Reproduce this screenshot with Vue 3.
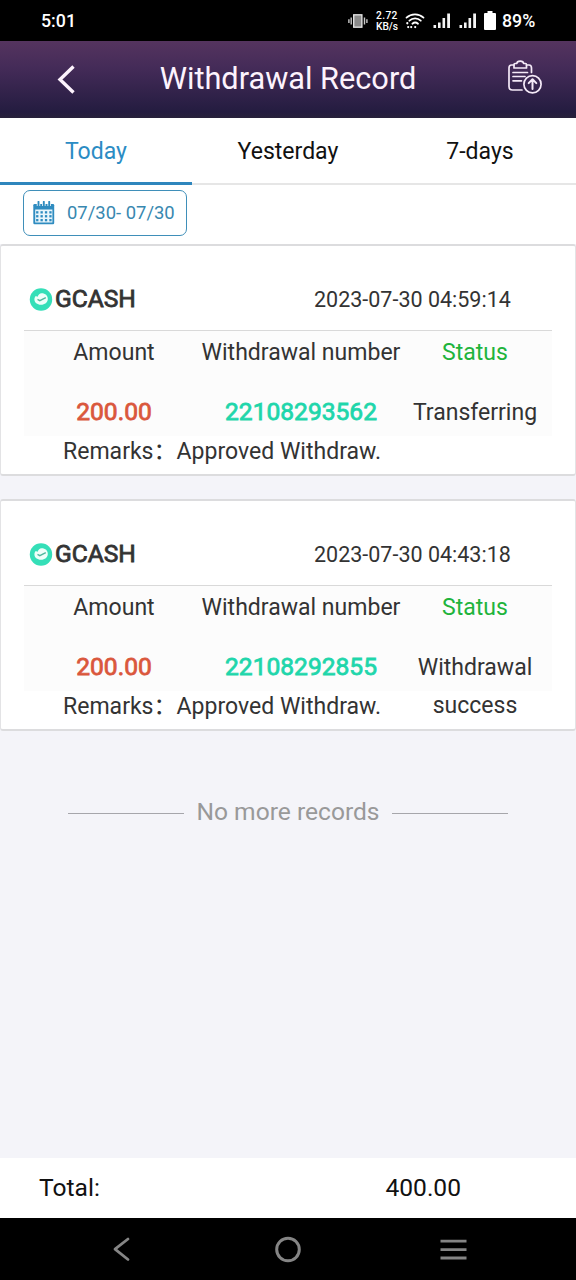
<script setup>
const tabs = ['Today', 'Yesterday', '7-days']
const records = [
  { time: '2023-07-30 04:59:14', amount: '200.00', number: '22108293562', status: 'Transferring' },
  { time: '2023-07-30 04:43:18', amount: '200.00', number: '22108292855', status: 'Withdrawal success' },
]
const dotRows = [12.5, 16.4, 20.3]
const dotCols = [4.2, 8.6, 13, 17.4]
</script>

<template>
  <div class="screen">
    <div class="statusbar">
      <span class="clock">5:01</span>
      <svg class="vibrate" width="20" height="16" viewBox="0 0 20 16">
        <rect x="5.7" y="1.8" width="8.2" height="12.4" fill="#8a8a8a" stroke="#e8e8e8" stroke-width="1.3" />
        <path d="M3.2 4.5v7M.9 6.3v3.6M16.5 4.5v7M18.9 6.3v3.6" stroke="#ccc" stroke-width="1.4" />
      </svg>
      <span class="speed"><span>2.72</span><span>KB/s</span></span>
      <svg class="wifi" width="20" height="17" viewBox="0 0 20 17" fill="none" stroke="#fff" stroke-width="1.8" stroke-linecap="round">
        <path d="M1.500 5.600C6.200 1.200 13.800 1.200 18.500 5.600M4.400 8.700C7.700 5.600 12.500 5.600 15.800 8.700M7.400 11.700C9 10.300 11.400 10.300 13 11.700" />
        <path d="M2.300 11.200v.1M3.200 15v.1M6.200 15v.1M10.200 15v.1" stroke-width="2.200" />
      </svg>
      <svg class="signal" width="18" height="17" viewBox="0 0 18 17" fill="#f4f4f4">
        <path d="M.5 13h2.600v3H.5zM5 10.500h2.600V16H5zM9.500 6h2.600v10H9.500zM14.200 1.500H17V16h-2.800z" />
      </svg>
      <svg class="signal" width="18" height="17" viewBox="0 0 18 17" fill="#f4f4f4">
        <path d="M.5 13h2.600v3H.5zM5 10.500h2.600V16H5zM9.500 6h2.600v10H9.500zM14.200 1.500H17V16h-2.800z" />
      </svg>
      <svg class="battery" width="12" height="19" viewBox="0 0 12 19" fill="#fff">
        <path d="M3.500 0h5v2H11q1 0 1 1v15q0 1-1 1H1q-1 0-1-1V3q0-1 1-1h2.500z" />
      </svg>
      <span class="percent">89%</span>
    </div>

    <header class="header">
      <svg class="back" width="20" height="32" viewBox="0 0 20 32">
        <path d="M18.500 2.500 5 15.500l13.500 13" fill="none" stroke="#fdf3fd" stroke-width="3.400" />
      </svg>
      <h1>Withdrawal Record</h1>
      <svg class="clip" width="36" height="36" viewBox="0 0 36 36" fill="none" stroke="#f5eaf8" stroke-width="1.7" stroke-linecap="round" stroke-linejoin="round">
        <path d="M7 5H4.500Q2 5 2 8v18.500Q2 30 5.500 30H15M19.500 5H22q2.500 0 2.500 3v4.500" />
        <path d="M7 8V4.500q0-1 1-1h1.800q.2-2.300 3.400-2.300t3.400 2.300h1.900q1 0 1 1V8z" />
        <path d="M6 12.500h14.500M6 16.500h12M6 20.800h8.500" />
        <circle cx="25.500" cy="24.200" r="8.600" />
        <path d="M25.500 29V19.500M21.700 23.100l3.800-3.800 3.800 3.800" stroke-width="2" />
      </svg>
    </header>

    <nav class="tabs">
      <div v-for="(tab, i) in tabs" :key="tab" class="tab" :class="{ active: i === 0 }">{{ tab }}</div>
    </nav>

    <div class="filter">
      <div class="range">
        <svg width="22" height="24" viewBox="0 0 22 24">
          <path d="M1.500 3H20q1.200 0 1.200 1.200V22q0 1.200-1.200 1.200H1.500Q.3 23.200.3 22V4.200Q.3 3 1.500 3z" fill="#2f8cc0" />
          <path d="M2.200 8.500h17.200v13H2.200z" fill="#e9f5fb" />
          <path d="M5.500 1v4M10.800 1v4M16.200 1v4" stroke="#fff" stroke-width="3.400" />
          <path d="M5.500 .8v4M10.800 .8v4M16.200 .8v4" stroke="#2f8cc0" stroke-width="1.900" stroke-linecap="round" />
          <template v-for="y in dotRows" :key="y">
            <rect v-for="x in dotCols" :key="x" :x="x - 1.100" :y="y - 2.300" width="2.300" height="2.300" fill="#2f8cc0" />
          </template>
        </svg>
        <span class="dates">07/30- 07/30</span>
      </div>
    </div>

    <main class="list">
      <section v-for="r in records" :key="r.number" class="card">
        <div class="top">
          <svg width="24" height="24" viewBox="0 0 24 24">
            <circle cx="12" cy="12.500" r="11.200" fill="#35dfb8" />
            <path d="M12.500 6.300c4 0 6.300 2.400 6.300 5.700s-3 5.800-6.800 5.800-6.600-2.300-6.600-5.500c0-1.400.5-2.500 1.300-3.400l1.900.8c.9-2 2.100-3.400 3.900-3.400z" fill="#effffa" />
            <path d="m8.500 12.400 2.300 1.200 6-3" fill="none" stroke="#52b99f" stroke-width="1.400" />
          </svg>
          <span class="method">GCASH</span>
          <span class="time">{{ r.time }}</span>
        </div>
        <div class="grid">
          <div>Amount</div>
          <div class="wide">Withdrawal number</div>
          <div class="green">Status</div>
          <div class="value amount">{{ r.amount }}</div>
          <div class="value number">{{ r.number }}</div>
          <div class="state">{{ r.status }}</div>
        </div>
        <div class="remarks">Remarks：Approved Withdraw.</div>
      </section>
      <div class="end"><span>No more records</span></div>
    </main>

    <footer class="total"><span>Total:</span><span class="sum">400.00</span></footer>

    <div class="navbar">
      <svg width="576" height="62" viewBox="0 0 576 62" fill="none" stroke="#858585" stroke-width="2.800">
        <path d="M128 21 115 31.200l13 10.300" stroke-linecap="round" stroke-linejoin="round" />
        <circle cx="288" cy="31.500" r="11.300" stroke-width="3" />
        <path d="M440.500 23.200h26M440.500 31.600h26M440.500 40h26" />
      </svg>
    </div>
  </div>
</template>

<style>
body {
  margin: 0;
}
</style>

<style scoped>
.screen {
  width: 576px;
  height: 1280px;
  display: flex;
  flex-direction: column;
  overflow: hidden;
  background: #f4f4f9;
  color: #333;
  font-family: Roboto, "Noto Sans CJK SC", sans-serif;
  font-size: 23.04px;
}
.statusbar {
  height: 41px;
  flex: none;
  display: flex;
  align-items: center;
  background: #000;
  color: #fff;
  font-weight: 500;
  font-size: 17.8px;
}
.clock {
  width: 307px;
  margin-left: 41px;
}
.speed {
  width: 23px;
  margin-left: 8px;
  display: flex;
  flex-direction: column;
  font-size: 10.2px;
  line-height: 11px;
}
.speed span:first-child {
  letter-spacing: 0.4px;
}
.wifi {
  margin-left: 6px;
}
.signal {
  margin-left: 8px;
}
.battery {
  margin-left: 7px;
}
.percent {
  margin-left: 6px;
}
.header {
  height: 77px;
  flex: none;
  display: flex;
  align-items: center;
  background: linear-gradient(#55345f, #442b58 35%, #241c40 92%, #27213a);
  color: #fdf3fd;
}
.back {
  margin-left: 55px;
}
h1 {
  margin: 0 0 2px;
  width: 426px;
  text-align: center;
  font-weight: 400;
  font-size: 30.72px;
}
.clip {
  margin-left: 6px;
  margin-top: -3px;
}
.tabs {
  height: 67px;
  flex: none;
  display: flex;
  background: #fff;
  color: #111;
}
.tab {
  flex: 1;
  box-sizing: border-box;
  text-align: center;
  line-height: 67px;
  height: 67px;
  border-bottom: 2px solid #e6e6e6;
}
.tab.active {
  color: #2b8cc4;
  border-bottom: 3px solid #2e86bd;
}
.filter {
  height: 59px;
  flex: none;
  box-sizing: border-box;
  padding: 5px 23px;
  background: #fff;
}
.range {
  width: 164px;
  height: 46px;
  box-sizing: border-box;
  display: flex;
  align-items: center;
  gap: 12px;
  padding-left: 9px;
  border: 1px solid #3f8fb9;
  border-radius: 7px;
  color: #3888b0;
  font-size: 18.43px;
  white-space: nowrap;
}
.dates {
  margin-bottom: 2px;
}
.list {
  flex: 1;
}
.card {
  height: 232px;
  box-sizing: border-box;
  margin-bottom: 23px;
  padding: 0 23px;
  border: 1px solid #e3e3e5;
  border-top: 2px solid #dcdcde;
  border-bottom: 2px solid #dcdcde;
  border-radius: 3px;
  background: #fff;
}
.top {
  height: 85px;
  box-sizing: border-box;
  padding: 22px 0 0 5px;
  display: flex;
  align-items: center;
  border-bottom: 1px solid #d9d9d9;
}
.method {
  width: 259px;
  margin-left: 2px;
  margin-bottom: 2px;
  font-size: 24.58px;
  -webkit-text-stroke: 0.8px #333;
}
.time {
  font-size: 21.5px;
}
.grid {
  height: 105px;
  box-sizing: border-box;
  padding-top: 3px;
  display: grid;
  grid-template-columns: 180px 194px 154px;
  grid-template-rows: 60px 39px;
  line-height: 38.5px;
  text-align: center;
  white-space: nowrap;
  background: #fcfcfc;
}
.wide {
  margin: 0 -10px;
}
.green {
  color: #1fb43c;
}
.value {
  font-size: 24.58px;
  line-height: 36.5px;
}
.amount {
  color: #da573c;
  -webkit-text-stroke: 0.8px #da573c;
}
.number {
  color: #1fd6ab;
  -webkit-text-stroke: 0.8px #1fd6ab;
}
.state {
  padding: 0 10px;
  line-height: 38px;
  white-space: normal;
}
.remarks {
  padding-left: 39px;
  line-height: 32px;
  white-space: nowrap;
}
.end {
  margin: 65px 68px 0;
  display: flex;
  align-items: center;
  gap: 12px;
  color: #999;
  font-size: 24.58px;
  line-height: 32px;
}
.end::before,
.end::after {
  content: "";
  flex: 1;
  height: 1px;
  margin-top: 2px;
  background: #a6a6ab;
}
.total {
  height: 60px;
  flex: none;
  display: flex;
  line-height: 60px;
  padding-left: 39px;
  background: #fff;
  color: #111;
  font-size: 24.58px;
}
.sum {
  margin-left: auto;
  margin-right: 115px;
}
.navbar {
  height: 62px;
  flex: none;
  background: #000;
}
</style>
